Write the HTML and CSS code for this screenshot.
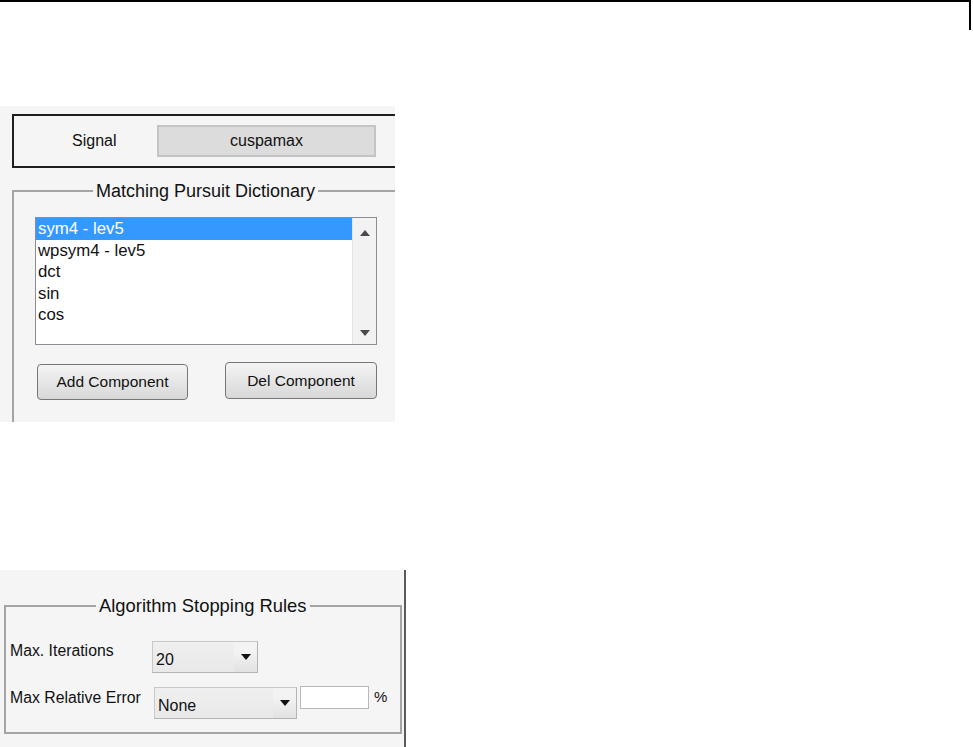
FILE: index.html
```html
<!DOCTYPE html>
<html lang="en">
<head>
  <meta charset="UTF-8" />
  <title>Matching Pursuit</title>
  <link rel="stylesheet" href="styles.css">
</head>
<body>

<div class="page-rule"></div>

<div class="shot shot-dict">
  <div class="signal-box">
    <span class="signal-label">Signal</span>
    <div class="signal-field">cuspamax</div>
  </div>

  <fieldset class="group group-dict">
    <legend>Matching Pursuit Dictionary</legend>
    <div class="listbox">
      <ul class="list-items">
        <li class="selected">sym4 - lev5</li>
        <li>wpsym4 - lev5</li>
        <li>dct</li>
        <li>sin</li>
        <li>cos</li>
      </ul>
      <div class="scrollbar">
        <svg class="arrow" width="10" height="6" viewBox="0 0 10 6"><path d="M0 6 L5 0 L10 6 Z" fill="#4a4a4a"/></svg>
        <svg class="arrow" width="10" height="6" viewBox="0 0 10 6"><path d="M0 0 L10 0 L5 6 Z" fill="#4a4a4a"/></svg>
      </div>
    </div>
    <div class="button-row">
      <button class="btn">Add Component</button>
      <button class="btn btn-del">Del Component</button>
    </div>
  </fieldset>
</div>

<div class="shot shot-rules">
  <fieldset class="group group-rules">
    <legend>Algorithm Stopping Rules</legend>
    <div class="rule-row">
      <span class="rule-label">Max. Iterations</span>
      <div class="dropdown dd-iter">
        <span class="dd-value">20</span>
        <span class="dd-btn"><svg width="10" height="6" viewBox="0 0 10 6"><path d="M0 0 L10 0 L5 6 Z" fill="#111"/></svg></span>
      </div>
    </div>
    <div class="rule-row row-error">
      <span class="rule-label">Max Relative Error</span>
      <div class="dropdown dd-error">
        <span class="dd-value">None</span>
        <span class="dd-btn"><svg width="10" height="6" viewBox="0 0 10 6"><path d="M0 0 L10 0 L5 6 Z" fill="#111"/></svg></span>
      </div>
      <input class="pct-input" type="text" />
      <span class="pct">%</span>
    </div>
  </fieldset>
</div>

</body>
</html>
```

FILE: styles.css
```css
body { margin: 0; background: #fff; font-family: "Liberation Sans", Arial, sans-serif; color: #111; }
.page-rule { width: 969px; height: 28px; border-top: 2px solid #000; border-right: 2px solid #000; }

.shot { background: #f5f5f5; overflow: hidden; }
.shot-dict { width: 395px; height: 316px; margin-top: 76px; padding-top: 8px; box-sizing: border-box; }
.shot-rules { width: 406px; height: 177px; margin-top: 148px; padding-top: 26px; box-sizing: border-box; border-right: 2px solid #5a5a5a; }

.signal-box { margin-left: 12px; height: 54px; box-sizing: border-box; border: 2px solid #1e1e1e; border-right: none; display: flex; align-items: center; }
.signal-label { width: 143px; padding-left: 58px; box-sizing: border-box; font-size: 16px; }
.signal-field { width: 219px; height: 32px; box-sizing: border-box; background: #dcdcdc; border: 2px solid #c4c4c4; text-align: center; line-height: 28px; font-size: 16px; }

.group { margin: 0; padding: 0; border: 2px solid #a4a4a4; }
.group legend { padding: 0 3px; font-size: 18px; line-height: 20px; }
.group-dict { margin: 13px 0 0 12px; border-right: none; border-bottom: none; height: 400px; }
.group-dict legend { margin-left: 79px; }
.group-rules { margin-left: 4px; width: 398px; height: 138px; box-sizing: border-box; }
.group-rules legend { margin-left: 90px; font-size: 18.4px; }

.listbox { margin: 16px 0 0 21px; width: 342px; height: 128px; box-sizing: border-box; border: 1px solid #8c8c94; background: #fff; display: flex; }
.list-items { list-style: none; margin: 0; padding: 0; flex: 1; font-size: 16.8px; }
.list-items li { height: 21.5px; line-height: 21.5px; padding-left: 2px; }
.list-items li.selected { background: #3399ff; color: #fff; }
.scrollbar { width: 24px; background: #f2f2f2; border-left: 1px solid #e4e4e4; display: flex; flex-direction: column; justify-content: space-between; align-items: center; padding: 12px 0 8px; box-sizing: border-box; }

.button-row { display: flex; gap: 37px; margin: 19px 0 0 23px; align-items: flex-start; }
.btn { width: 151px; height: 36px; border: 1px solid #777; border-radius: 4px; background: linear-gradient(#f4f4f4, #e6e6e6 50%, #d8d8d8); font-family: inherit; font-size: 15.5px; color: #111; padding: 0; }
.btn-del { width: 152px; height: 37px; margin-top: -2px; }

.rule-row { display: flex; align-items: flex-start; padding-left: 4px; }
.rule-row:first-of-type { margin-top: 25px; }
.row-error { margin-top: 13px; }
.rule-label { width: 142px; line-height: 20px; font-size: 15.8px; }
.row-error .rule-label { margin-top: 2px; width: 144px; }

.dropdown { height: 32px; box-sizing: border-box; border: 1px solid #b4b4b4; border-top-color: #c8c8c8; border-left-color: #c8c8c8; background: linear-gradient(#efefef, #e9e9e9); display: flex; align-items: stretch; }
.dd-iter { width: 106px; }
.dd-error { width: 143px; margin-top: 1px; }
.dd-value { flex: 1; padding: 8px 0 0 3px; font-size: 16px; line-height: 20px; }
.dd-btn { width: 23px; background: linear-gradient(#f3f3f3 30%, #e2e2e2); display: flex; align-items: center; justify-content: center; }

.pct-input { width: 69px; height: 23px; box-sizing: border-box; margin: 0 0 0 3px; border: 1px solid #b8b8b8; background: #fff; padding: 0; }
.pct { margin: 1px 0 0 5px; font-size: 15px; line-height: 20px; }
```
